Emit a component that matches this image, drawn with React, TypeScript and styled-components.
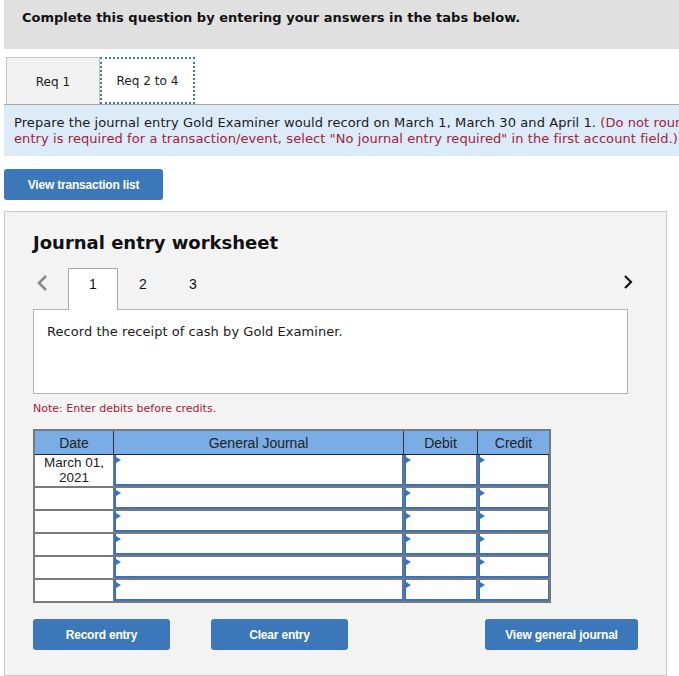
import React from 'react';
import styled, { createGlobalStyle } from 'styled-components';

const GlobalStyle = createGlobalStyle`
  html, body {
    margin: 0;
    padding: 0;
    background: #ffffff;
  }
  body {
    font-family: "DejaVu Sans", Verdana, sans-serif;
    color: #1a1a1a;
  }
`;

const Page = styled.div`
  width: 679px;
  height: 676px;
  overflow: hidden;
  padding-left: 4px;
  box-sizing: border-box;
`;

const Header = styled.div`
  width: 900px;
  height: 49px;
  box-sizing: border-box;
  background: #e0e0e0;
  padding: 10px 18px;
  font-size: 13px;
  font-weight: bold;
  line-height: 16px;
  color: #111;
`;

const TabBar = styled.div`
  display: flex;
  margin-top: 8px;
  padding-left: 2px;
  width: 900px;
  border-bottom: 1px solid #a9a9a9;
`;

const ReqTab = styled.div<{ $active?: boolean }>`
  width: ${p => (p.$active ? '95px' : '94px')};
  height: 47px;
  box-sizing: border-box;
  display: flex;
  align-items: center;
  justify-content: center;
  padding-top: 1px;
  font-size: 12px;
  letter-spacing: 0.05px;
  color: #1a1a1a;
  background: ${p => (p.$active ? '#ffffff' : '#f2f2f2')};
  border: ${p => (p.$active ? '2px dotted #3b78b9' : '1px solid #c4c4c4')};
  border-bottom: ${p => (p.$active ? '2px dotted #3b78b9' : 'none')};
  margin-bottom: ${p => (p.$active ? '-1px' : '0')};
`;

const Instructions = styled.div`
  width: 1100px;
  box-sizing: border-box;
  background: #dcebf8;
  padding: 10px 10px 9px;
  font-size: 13px;
  line-height: 16px;
  letter-spacing: 0.08px;
  color: #1a1a1a;
`;

const Red = styled.span`
  color: #a3213a;
`;

const BlueButton = styled.button<{ $width: number }>`
  width: ${p => p.$width}px;
  height: 31px;
  border: none;
  border-radius: 3px;
  background: #3b77b9;
  color: #ffffff;
  font-family: "Liberation Sans", Arial, sans-serif;
  font-size: 12px;
  font-weight: bold;
  letter-spacing: -0.2px;
  padding: 0;
  cursor: pointer;
`;

const TopActions = styled.div`
  margin-top: 13px;
  display: flex;
`;

const Panel = styled.div`
  margin-top: 11px;
  width: 663px;
  height: 465px;
  box-sizing: border-box;
  background: #f3f3f3;
  border: 1px solid #c9c9c9;
  padding: 20px 38px 0 28px;
`;

const Title = styled.h2`
  margin: 0;
  font-size: 18px;
  font-weight: bold;
  line-height: 22px;
  color: #111;
`;

const EntryNav = styled.div`
  margin-top: 14px;
  display: flex;
  align-items: stretch;
  height: 41px;
`;

const NavArrow = styled.div<{ $right?: boolean }>`
  width: 35px;
  display: flex;
  align-items: flex-start;
  padding-top: 6px;
  justify-content: ${p => (p.$right ? 'flex-end' : 'flex-start')};
  padding-left: ${p => (p.$right ? '0' : '3px')};
  box-sizing: border-box;
  margin-left: ${p => (p.$right ? 'auto' : '0')};
  margin-right: ${p => (p.$right ? '-5px' : '0')};
`;

const EntryTab = styled.div<{ $active?: boolean }>`
  width: 50px;
  box-sizing: border-box;
  display: flex;
  align-items: flex-start;
  justify-content: center;
  padding-top: 7px;
  font-family: "Liberation Sans", Arial, sans-serif;
  font-size: 14px;
  line-height: 16px;
  color: #111;
  background: ${p => (p.$active ? '#ffffff' : 'transparent')};
  border: ${p => (p.$active ? '1px solid #a9a9a9' : '1px solid transparent')};
  border-bottom: none;
  position: relative;
  z-index: 1;
  margin-bottom: -1px;
`;

const Prompt = styled.div`
  height: 85px;
  box-sizing: border-box;
  background: #ffffff;
  border: 1px solid #b3b3b3;
  padding: 14px 13px;
  font-size: 13px;
  line-height: 16px;
  letter-spacing: 0.05px;
  color: #1a1a1a;
`;

const Note = styled.div`
  margin-top: 8px;
  font-size: 11px;
  line-height: 14px;
  color: #a3213a;
`;

const Table = styled.table`
  margin-top: 13px;
  border-collapse: collapse;
  border: 2px solid #7a7a7a;
  font-family: "Liberation Sans", Arial, sans-serif;
  table-layout: fixed;
`;

const HeadCell = styled.th<{ $width: number }>`
  width: ${p => p.$width}px;
  height: 23px;
  padding: 0;
  background: #7aade5;
  border-left: 1px solid #333;
  border-bottom: 1px solid #222;
  font-size: 14px;
  font-weight: normal;
  color: #222;
  &:first-child {
    border-left: none;
  }
`;

const DateCell = styled.td<{ $tall?: boolean }>`
  height: ${p => (p.$tall ? '31px' : '21px')};
  padding: 0;
  background: #ffffff;
  border-top: 2px solid #7a7a7a;
  text-align: center;
  vertical-align: top;
  font-size: 13.5px;
  line-height: 15px;
  color: #222;
  tr:first-child > & {
    border-top: none;
  }
`;

const InputCell = styled.td`
  position: relative;
  padding: 0;
  background: #ffffff;
  border-left: 1px solid #7a7a7a;
  border-top: 2px solid #7a7a7a;
  box-shadow: inset 2px 0 0 #3b72b8, inset -1px 0 0 #3b72b8, inset 0 -2px 0 #3b72b8;
  tr:first-child > & {
    border-top: none;
  }
  &::before {
    content: '';
    position: absolute;
    left: 2px;
    top: 2px;
    border-left: 5px solid #3b72b8;
    border-top: 3px solid transparent;
    border-bottom: 3px solid transparent;
  }
`;

const BottomActions = styled.div`
  margin-top: 16px;
  width: 605px;
  display: flex;
  gap: 41px;
  & > :last-child {
    margin-left: auto;
  }
`;

const ChevronLeft = () => (
  <svg width="12" height="18" viewBox="0 0 12 18">
    <polyline points="10,2 3,9 10,16" fill="none" stroke="#8a8a8a" strokeWidth="2.6" />
  </svg>
);

const ChevronRight = () => (
  <svg width="10" height="16" viewBox="0 0 10 16">
    <polyline points="2,2 8,8 2,14" fill="none" stroke="#111" strokeWidth="2.2" />
  </svg>
);

const rows = [
  { date: ['March 01,', '2021'] },
  { date: [] },
  { date: [] },
  { date: [] },
  { date: [] },
  { date: [] },
];

export default function App() {
  return (
    <>
      <GlobalStyle />
      <Page>
        <Header>Complete this question by entering your answers in the tabs below.</Header>
        <TabBar>
          <ReqTab>Req 1</ReqTab>
          <ReqTab $active>Req 2 to 4</ReqTab>
        </TabBar>
        <Instructions>
          Prepare the journal entry Gold Examiner would record on March 1, March 30 and April 1.{' '}
          <Red>(Do not round intermediate calculations. If no journal</Red>
          <br />
          <Red>entry is required for a transaction/event, select "No journal entry required" in the first account field.)</Red>
        </Instructions>
        <TopActions>
          <BlueButton $width={159}>View transaction list</BlueButton>
        </TopActions>
        <Panel>
          <Title>Journal entry worksheet</Title>
          <EntryNav>
            <NavArrow>
              <ChevronLeft />
            </NavArrow>
            <EntryTab $active>1</EntryTab>
            <EntryTab>2</EntryTab>
            <EntryTab>3</EntryTab>
            <NavArrow $right>
              <ChevronRight />
            </NavArrow>
          </EntryNav>
          <Prompt>Record the receipt of cash by Gold Examiner.</Prompt>
          <Note>Note: Enter debits before credits.</Note>
          <Table>
            <thead>
              <tr>
                <HeadCell $width={78}>Date</HeadCell>
                <HeadCell $width={289}>General Journal</HeadCell>
                <HeadCell $width={73}>Debit</HeadCell>
                <HeadCell $width={71}>Credit</HeadCell>
              </tr>
            </thead>
            <tbody>
              {rows.map((row, i) => (
                <tr key={i}>
                  <DateCell $tall={i === 0}>
                    {row.date.map(line => (
                      <div key={line}>{line}</div>
                    ))}
                  </DateCell>
                  <InputCell />
                  <InputCell />
                  <InputCell />
                </tr>
              ))}
            </tbody>
          </Table>
          <BottomActions>
            <BlueButton $width={137}>Record entry</BlueButton>
            <BlueButton $width={137}>Clear entry</BlueButton>
            <BlueButton $width={153}>View general journal</BlueButton>
          </BottomActions>
        </Panel>
      </Page>
    </>
  );
}
